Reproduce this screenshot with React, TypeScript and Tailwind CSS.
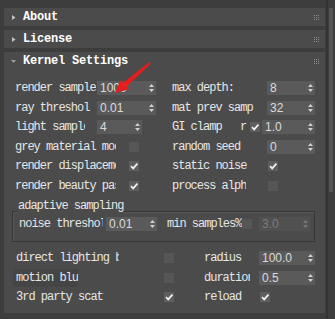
import React from "react";

const mono = "[font-family:'Liberation_Mono','DejaVu_Sans_Mono',monospace]";

function Spin({
  value,
  className = "",
  disabled = false,
}: {
  value: string;
  className?: string;
  disabled?: boolean;
}) {
  return (
    <div
      className={`flex h-[14px] shrink-0 items-center justify-between pl-[3px] pr-[2px] ${
        disabled ? "bg-[#515151] text-[#7c7c7c]" : "bg-[#5a5a5a] text-[#dadada]"
      } ${className}`}
    >
      <span className="[font-family:'Liberation_Sans',Arial,sans-serif] text-[12px] leading-none tracking-[0px]">
        {value}
      </span>
      <svg width="5" height="10" viewBox="0 0 5 10">
        <path
          d="M0 4 L2.5 1 L5 4Z M0 6 L2.5 9 L5 6Z"
          fill={disabled ? "#777" : "#d0d0d0"}
        />
      </svg>
    </div>
  );
}

function Check({ on = false, dim = false }: { on?: boolean; dim?: boolean }) {
  return (
    <div
      className={`flex h-[10px] w-[10px] shrink-0 items-center justify-center ${
        dim ? "bg-[#565656]" : "bg-[#5e5e5e]"
      }`}
    >
      {on && (
        <svg width="10" height="10" viewBox="0 0 10 10">
          <path d="M2 5.2 L4.2 7.4 L8.4 2.6" stroke="#f2f2f2" strokeWidth="1.7" fill="none" />
        </svg>
      )}
    </div>
  );
}

function Label({ text, slot, clip }: { text: string; slot: string; clip: string }) {
  return (
    <div className={`${slot} shrink-0`}>
      <div className={`${clip} overflow-hidden whitespace-nowrap`}>{text}</div>
    </div>
  );
}

function Grip() {
  return (
    <svg width="5" height="5" viewBox="0 0 5 5" className="ml-auto">
      {[0, 2, 4].map((y) =>
        [0, 2, 4].map((x) => <rect key={`${x}-${y}`} x={x} y={y} width="1" height="1" fill="#8c8c8c" />)
      )}
    </svg>
  );
}

function Header({ title, open = false }: { title: string; open?: boolean }) {
  return (
    <div className="flex h-[18px] items-center pl-[7px] pr-[6px]">
      <svg width="6" height="7" viewBox="0 0 6 7">
        {open ? (
          <path d="M0 2 L5 2 L2.5 5Z" fill="#9a9a9a" />
        ) : (
          <path d="M1 1 L4.5 3.5 L1 6Z" fill="#c4c4c4" />
        )}
      </svg>
      <span className="ml-[6px] text-[12px] font-bold tracking-[-0.2px] text-white">{title}</span>
      <Grip />
    </div>
  );
}

function Row({ children }: { children: React.ReactNode }) {
  return <div className="flex h-[19.5px] items-center pl-[11px]">{children}</div>;
}

export default function App() {
  return (
    <div
      className={`relative flex h-[319px] w-[335px] overflow-hidden bg-[#3d3d3d] text-[#e6e6e6] ${mono} text-[12px] tracking-[-1px]`}
    >
      <div className="flex w-[326px] flex-col gap-[4px] pl-[4px] pr-[1px] pt-[8px]">
        <div className="bg-[#4b4b4b]">
          <Header title="About" />
        </div>
        <div className="bg-[#4b4b4b]">
          <Header title="License" />
        </div>
        <div className="h-[261px] bg-[#4b4b4b]">
          <Header title="Kernel Settings" open />
          <div className="pt-[8.25px]">
            <Row>
              <div className="flex w-[157px] items-center">
                <Label text="render samples" slot="w-[82px]" clip="w-[81px]" />
                <Spin value="1000" className="w-[59px]" />
              </div>
              <Label text="max depth:" slot="w-[95px]" clip="w-[95px]" />
              <Spin value="8" className="w-[48px]" />
            </Row>
            <Row>
              <div className="flex w-[157px] items-center">
                <Label text="ray threshol" slot="w-[82px]" clip="w-[82px]" />
                <Spin value="0.01" className="w-[59px]" />
              </div>
              <Label text="mat prev samp" slot="w-[95px]" clip="w-[95px]" />
              <Spin value="32" className="w-[48px]" />
            </Row>
            <Row>
              <div className="flex w-[157px] items-center">
                <Label text="light samples" slot="w-[82px]" clip="w-[70px]" />
                <Spin value="4" className="w-[45px]" />
              </div>
              <Label text="GI clamp" slot="w-[68px]" clip="w-[68px]" />
              <Label text="r" slot="w-[10px]" clip="w-[10px]" />
              <Check on />
              <Spin value="1.0" className="ml-[2px] w-[53px]" />
            </Row>
            <Row>
              <div className="flex w-[157px] items-center">
                <Label text="grey material mode" slot="w-[114px]" clip="w-[101px]" />
                <Check dim />
              </div>
              <Label text="random seed" slot="w-[95px]" clip="w-[95px]" />
              <Spin value="0" className="w-[48px]" />
            </Row>
            <Row>
              <div className="flex w-[157px] items-center">
                <Label text="render displacement" slot="w-[114px]" clip="w-[101px]" />
                <Check on />
              </div>
              <Label text="static noise" slot="w-[96px]" clip="w-[96px]" />
              <Check on />
            </Row>
            <Row>
              <div className="flex w-[157px] items-center">
                <Label text="render beauty pass" slot="w-[114px]" clip="w-[101px]" />
                <Check on />
              </div>
              <Label text="process alpha" slot="w-[96px]" clip="w-[74px]" />
              <Check dim />
            </Row>

            <div className="relative ml-[8px] mt-[15.75px] h-[31px] w-[303px] border border-[#363636] shadow-[inset_1px_1px_0_#565656]">
              <div className="absolute left-[4px] top-[-13px] bg-[#4b4b4b] px-[1px] leading-[14px]">
                adaptive sampling
              </div>
              <div className="box-content flex h-[19.5px] items-center pl-[6px] pt-[2px]">
                <Label text="noise threshold" slot="w-[87px]" clip="w-[84px]" />
                <Spin value="0.01" className="w-[51px]" />
                <div className="ml-[10px] flex items-center">
                  <Label text="min samples%" slot="w-[75px]" clip="w-[75px]" />
                  <Check dim />
                  <Spin value="3.0" disabled className="ml-[7px] w-[51px]" />
                </div>
              </div>
            </div>

            <div className="mt-[6.25px]">
              <div className="flex h-[19.5px] items-center pl-[12px]">
                <Label text="direct lighting by" slot="w-[148px]" clip="w-[103px]" />
                <Check dim />
                <Label text="radius" slot="ml-[30px] w-[55px]" clip="w-[55px]" />
                <Spin value="100.0" className="w-[56px]" />
              </div>
              <div className="flex h-[19.5px] items-center pl-[12px]">
                <Label
                  text="motion blur"
                  slot="w-[148px]"
                  clip="-ml-[3px] w-[65px] bg-[#454545] pl-[3px]"
                />
                <Check dim />
                <Label text="duration" slot="ml-[30px] w-[55px]" clip="w-[46px]" />
                <Spin value="0.5" className="w-[56px]" />
              </div>
              <div className="flex h-[19.5px] items-center pl-[12px]">
                <Label text="3rd party scatter" slot="w-[148px]" clip="w-[88px]" />
                <Check on />
                <Label text="reload" slot="ml-[30px] w-[56px]" clip="w-[56px]" />
                <Check on />
              </div>
            </div>
          </div>
        </div>
      </div>

      <div className="w-[9px] border-l-2 border-[#333333] pl-[1px] pt-[8px]">
        <div className="h-[184px] w-[4px] bg-[#555555]" />
      </div>

      <svg className="pointer-events-none absolute inset-0" width="335" height="319" viewBox="0 0 335 319">
        <polygon points="150.8,63.8 149.2,62.2 123.2,82.7 126.6,86.5" fill="#e81c1c" />
        <polygon points="115,93 120.8,80 129,89" fill="#e81c1c" />
      </svg>
    </div>
  );
}
